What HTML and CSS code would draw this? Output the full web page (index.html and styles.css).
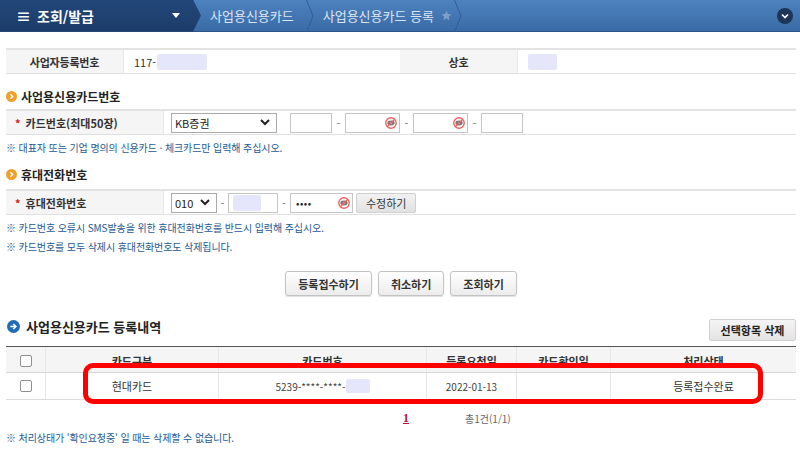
FILE: index.html
```html
<!DOCTYPE html>
<html lang="ko">
<head>
<meta charset="utf-8">
<title>사업용신용카드 등록</title>
<link rel="stylesheet" href="styles.css">
</head>
<body>
<header class="topbar">
  <div class="menu">
    <span class="burger">≡</span>
    <span class="menu-title">조회/발급</span>
    <svg class="caret" width="8" height="5" viewBox="0 0 8 5"><path d="M0 0h8L4 5z" fill="#fff"/></svg>
  </div>
  <span class="crumb first">사업용신용카드</span>
  <svg class="sep" width="8" height="32" viewBox="0 0 8 32"><polyline points="0.5,0 7,16 0.5,32" fill="none" stroke="#2f5d95" stroke-width="1"/></svg>
  <span class="crumb">사업용신용카드 등록</span>
  <svg class="star" width="11" height="11" viewBox="0 0 24 24"><path d="M12 1.5l3.1 7.2 7.8.7-5.9 5.2 1.8 7.6L12 18.2l-6.8 4 1.8-7.6L1.1 9.4l7.8-.7z" fill="#7d9fc8"/></svg>
  <svg class="sep" width="8" height="32" viewBox="0 0 8 32"><polyline points="0.5,0 7,16 0.5,32" fill="none" stroke="#2f5d95" stroke-width="1"/></svg>
  <span class="spacer"></span>
  <span class="circle-btn"><svg width="16" height="16" viewBox="0 0 16 16"><circle cx="8" cy="8" r="8" fill="#1e3557"/><path d="M5 6.5l3 3 3-3" fill="none" stroke="#fff" stroke-width="1.6"/></svg></span>
</header>

<main class="content">
  <div class="info-row">
    <div class="lbl">사업자등록번호</div>
    <div class="val">117-<span class="mask w50"></span></div>
    <div class="lbl">상호</div>
    <div class="val"><span class="mask w29 nomargin"></span></div>
  </div>

  <h2 class="sec-title"><svg class="ico" width="11" height="11" viewBox="0 0 12 12"><circle cx="6" cy="6" r="6" fill="#f0a028"/><path d="M4.8 3.5L7.3 6 4.8 8.5" fill="none" stroke="#fff" stroke-width="1.6"/></svg>사업용신용카드번호</h2>
  <div class="form-row">
    <div class="flbl"><span class="req">*</span>카드번호(최대50장)</div>
    <div class="fval">
      <div class="select wide"><span>KB증권</span><svg width="10" height="7" viewBox="0 0 10 7"><path d="M1 1l4 4 4-4" fill="none" stroke="#222" stroke-width="2"/></svg></div>
      <span class="inp w42"></span><span class="dash">-</span>
      <span class="inp w55 eyeinp"><svg class="eye" width="12" height="12" viewBox="0 0 12 12"><circle cx="6" cy="6" r="5.2" fill="#fff" stroke="#f06060" stroke-width="1.4"/><ellipse cx="6" cy="6" rx="3.6" ry="2.4" fill="#777"/><circle cx="6" cy="6" r="1.1" fill="#ddd"/><line x1="2.5" y1="9.5" x2="9.5" y2="2.5" stroke="#f06060" stroke-width="1.2"/></svg></span><span class="dash">-</span>
      <span class="inp w55 eyeinp"><svg class="eye" width="12" height="12" viewBox="0 0 12 12"><circle cx="6" cy="6" r="5.2" fill="#fff" stroke="#f06060" stroke-width="1.4"/><ellipse cx="6" cy="6" rx="3.6" ry="2.4" fill="#777"/><circle cx="6" cy="6" r="1.1" fill="#ddd"/><line x1="2.5" y1="9.5" x2="9.5" y2="2.5" stroke="#f06060" stroke-width="1.2"/></svg></span><span class="dash">-</span>
      <span class="inp w42"></span>
    </div>
  </div>
  <p class="note first-note">※ 대표자 또는 기업 명의의 신용카드 · 체크카드만 입력해 주십시오.</p>

  <h2 class="sec-title second"><svg class="ico" width="11" height="11" viewBox="0 0 12 12"><circle cx="6" cy="6" r="6" fill="#f0a028"/><path d="M4.8 3.5L7.3 6 4.8 8.5" fill="none" stroke="#fff" stroke-width="1.6"/></svg>휴대전화번호</h2>
  <div class="form-row">
    <div class="flbl"><span class="req">*</span>휴대전화번호</div>
    <div class="fval">
      <div class="select narrow"><span>010</span><svg width="10" height="7" viewBox="0 0 10 7"><path d="M1 1l4 4 4-4" fill="none" stroke="#222" stroke-width="2"/></svg></div>
      <span class="dash p1">-</span>
      <span class="inp w50 pad"><span class="mask w28 nomargin"></span></span><span class="dash p2">-</span>
      <span class="inp w63 eyeinp dots">••••<svg class="eye" width="12" height="12" viewBox="0 0 12 12"><circle cx="6" cy="6" r="5.2" fill="#fff" stroke="#f06060" stroke-width="1.4"/><ellipse cx="6" cy="6" rx="3.6" ry="2.4" fill="#777"/><circle cx="6" cy="6" r="1.1" fill="#ddd"/><line x1="2.5" y1="9.5" x2="9.5" y2="2.5" stroke="#f06060" stroke-width="1.2"/></svg></span>
      <span class="btn-small">수정하기</span>
    </div>
  </div>
  <p class="note after-row">※ 카드번호 오류시 SMS발송을 위한 휴대전화번호를 반드시 입력해 주십시오.</p>
  <p class="note">※ 카드번호를 모두 삭제시 휴대전화번호도 삭제됩니다.</p>

  <div class="actions">
    <span class="btn">등록접수하기</span>
    <span class="btn">취소하기</span>
    <span class="btn">조회하기</span>
  </div>

  <div class="list-head">
    <h2 class="list-title"><svg class="ico2" width="13" height="13" viewBox="0 0 13 13"><circle cx="6.5" cy="6.5" r="6.5" fill="#1f6cb8"/><path d="M3.3 6.5h5.5M6.3 4l2.6 2.5-2.6 2.5" fill="none" stroke="#fff" stroke-width="1.6"/></svg>사업용신용카드 등록내역</h2>
    <span class="btn-del">선택항목 삭제</span>
  </div>

  <div class="table-wrap">
    <div class="grid head">
      <div class="c"><span class="chk"></span></div>
      <div class="c">카드구분</div>
      <div class="c">카드번호</div>
      <div class="c">등록요청일</div>
      <div class="c">카드확인일</div>
      <div class="c">처리상태</div>
    </div>
    <div class="grid body">
      <div class="c"><span class="chk"></span></div>
      <div class="c">현대카드</div>
      <div class="c num">5239-****-****-<span class="mask w24 nomargin"></span></div>
      <div class="c num">2022-01-13</div>
      <div class="c"></div>
      <div class="c">등록접수완료</div>
    </div>
    <div class="highlight"></div>
  </div>

  <div class="pager">
    <span class="page">1</span>
    <span class="total">총1건(1/1)</span>
  </div>
  <p class="note">※ 처리상태가 '확인요청중' 일 때는 삭제할 수 없습니다.</p>
</main>
</body>
</html>
```

FILE: styles.css
```css
* { box-sizing: border-box; }
html, body { margin: 0; padding: 0; background: #fff; }
body {
  font-family: "Noto Sans CJK KR", "Noto Sans", sans-serif;
  font-size: 11px;
  color: #333;
  width: 800px;
  height: 451px;
  overflow: hidden;
}

/* top bar */
.topbar {
  height: 32px;
  display: flex;
  align-items: center;
  background: linear-gradient(#4d82bf, #3a6ba6);
  border-bottom: 1px solid #2c5689;
  color: #dbe5f1;
}
.menu {
  width: 201px;
  height: 32px;
  display: flex;
  align-items: center;
  background: linear-gradient(#22477a, #1c3c69);
  clip-path: polygon(0 0, 193px 0, 201px 50%, 193px 100%, 0 100%);
  color: #fff;
  padding-left: 16px;
}
.burger { font-size: 15px; font-weight: bold; width: 21px; line-height: 1; }
.menu-title { font-size: 14px; font-weight: bold; }
.caret { margin-left: auto; margin-right: 21px; }
.crumb { font-size: 13px; margin: 0 10px 0 9px; white-space: nowrap; }
.crumb.first { margin-right: 12px; }
.sep { flex: none; }
.star { margin: 0 2px 0 -3px; }
.spacer { flex: 1; }
.circle-btn { display: flex; margin-right: 7px; }

/* content */
.content { padding: 0 4px 0 6px; }

.info-row {
  margin-top: 16px;
  display: grid;
  grid-template-columns: 118px 276px 118px 1fr;
  height: 26px;
  border-top: 2px solid #e3e3e3;
  border-bottom: 1px solid #e0e0e0;
}
.lbl {
  background: #f5f5f5;
  font-weight: bold;
  font-size: 11px;
  display: flex;
  align-items: center;
  justify-content: center;
  border-right: 1px solid #e8e8e8;
  letter-spacing: -0.2px;
}
.val { display: flex; align-items: center; padding-left: 10px; color: #333; }
.mask { display: inline-block; height: 16px; background: #e6e6fb; border-radius: 2px; margin-left: 1px; }
.mask.nomargin { margin-left: 0; }
.w50 { width: 50px; }
.w29 { width: 29px; }
.w28 { width: 28px; }
.w24 { width: 24px; height: 14px; }

.sec-title {
  margin: 12px 0 3px;
  height: 20px;
  display: flex;
  align-items: center;
  font-size: 12px;
  font-weight: bold;
  color: #222;
}
.sec-title.second { margin-top: 7px; margin-bottom: 5px; }
.ico { margin: 0 4px 0 0; }

.form-row {
  display: grid;
  grid-template-columns: 158px 1fr;
  height: 26px;
  border-top: 2px solid #e3e3e3;
  border-bottom: 1px solid #e0e0e0;
}
.flbl {
  background: #f5f5f5;
  font-weight: bold;
  font-size: 11px;
  display: flex;
  align-items: center;
  padding-left: 9px;
  border-right: 1px solid #e8e8e8;
}
.req { color: #d02020; margin-right: 5px; font-size: 11px; }
.fval { display: flex; align-items: center; padding-left: 7px; }
.select {
  height: 20px;
  border: 1px solid #a9a9a9;
  display: flex;
  align-items: center;
  justify-content: space-between;
  padding: 0 6px 0 3px;
  font-size: 11px;
  color: #222;
  background: #fff;
  flex: none;
}
.select.wide { width: 106px; margin-right: 13px; }
.select.narrow { width: 46px; }
.inp {
  height: 20px;
  border: 1px solid #c4c4c4;
  background: #fff;
  display: inline-flex;
  align-items: center;
  flex: none;
}
.w42 { width: 42px; }
.w55 { width: 55px; }
.w63 { width: 63px; }
.inp.pad { padding-left: 4px; }
.eyeinp { justify-content: flex-end; padding-right: 2px; }
.dots { justify-content: space-between; padding-left: 5px; font-size: 10px; letter-spacing: 0.5px; color: #222; }
.dash { width: 11px; text-align: center; color: #777; font-size: 11px; margin: 0 1px; flex: none; }
.dash.p1 { width: 11px; margin: 0; }
.dash.p2 { width: 12px; margin: 0; }
.btn-small {
  margin-left: 3px;
  height: 20px;
  padding: 0 9px;
  display: inline-flex;
  align-items: center;
  background: linear-gradient(#f2f2f2, #e2e2e2);
  border: 1px solid #cfcfcf;
  border-radius: 2px;
  font-size: 11px;
  color: #333;
}

.note {
  margin: 0;
  line-height: 19px;
  height: 19px;
  font-size: 10px;
  color: #1d5a95;
  letter-spacing: -0.1px;
}
.first-note { margin-top: 3px; }
.after-row { margin-top: 3px; }

.actions {
  margin-top: 15px;
  display: flex;
  justify-content: center;
  gap: 6px;
}
.btn {
  height: 25px;
  padding: 0 12px;
  display: inline-flex;
  align-items: center;
  background: linear-gradient(#ffffff, #ececec);
  border: 1px solid #c3c3c3;
  border-radius: 3px;
  box-shadow: 0 1px 1px rgba(0,0,0,0.12);
  font-weight: bold;
  font-size: 11px;
  color: #333;
}

.list-head {
  margin-top: 21px;
  height: 26px;
  display: flex;
  justify-content: space-between;
  align-items: flex-start;
}
.list-title {
  margin: 0;
  font-size: 13px;
  font-weight: bold;
  color: #222;
  display: flex;
  align-items: center;
  height: 18px;
}
.ico2 { margin: 0 6px 0 1px; }
.btn-del {
  margin-top: 2px;
  height: 22px;
  width: 87px;
  display: inline-flex;
  align-items: center;
  justify-content: center;
  background: linear-gradient(#f4f4f4, #e4e4e4);
  border: 1px solid #d0d0d0;
  border-radius: 2px;
  font-size: 11px;
  font-weight: bold;
  color: #222;
}

.table-wrap { position: relative; margin-top: 3px; width: 790px; }
.grid {
  display: grid;
  grid-template-columns: 39px 173px 208px 90px 94px 1fr;
  height: 27px;
}
.grid.head {
  background: #f5f5f5;
  border-top: 1px solid #555;
  border-bottom: 1px solid #d6d6d6;
  font-weight: bold;
}
.grid.head .c { padding-top: 2px; }
.grid.body { border-bottom: 1px solid #dcdcdc; }
.c {
  display: flex;
  align-items: center;
  justify-content: center;
  border-left: 1px solid #e6e6e6;
  font-size: 11px;
}
.c:first-child { border-left: none; }
.num { font-size: 10px; color: #444; }
.chk {
  width: 12px;
  height: 12px;
  border: 1px solid #8f8f8f;
  border-radius: 2px;
  background: #fff;
}
.highlight {
  position: absolute;
  left: 77px;
  top: 17px;
  width: 680px;
  height: 41px;
  border: 5px solid #ff0000;
  border-radius: 10px;
}

.pager {
  height: 20px;
  margin-top: 8px;
  display: flex;
  align-items: center;
  padding-left: 397px;
}
.page {
  font-family: "Liberation Serif", serif;
  font-weight: bold;
  color: #b0123a;
  text-decoration: underline;
  font-size: 12px;
}
.total { margin-left: 56px; color: #666; font-size: 10px; }
```
